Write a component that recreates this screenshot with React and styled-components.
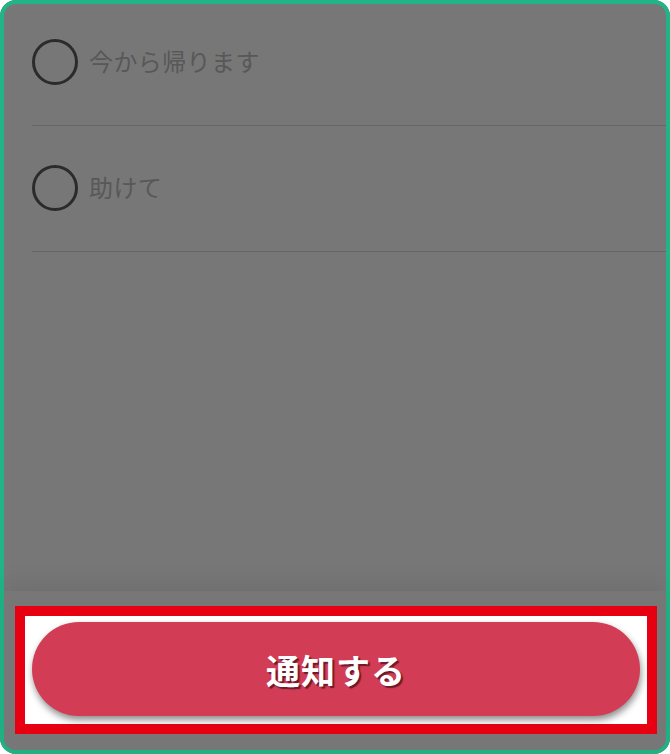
import React, { useState } from "react";
import styled, { createGlobalStyle } from "styled-components";

const GlobalStyle = createGlobalStyle`
  html, body {
    margin: 0;
    padding: 0;
    background: #ffffff;
  }
  * {
    box-sizing: border-box;
  }
`;

const options = [
  { id: 1, label: "今から帰ります" },
  { id: 2, label: "助けて" },
];

const Frame = styled.div`
  width: 670px;
  height: 754px;
  background: #777777;
  border-radius: 16px;
  box-shadow: inset 0 0 0 4px #20b486;
  display: flex;
  flex-direction: column;
  overflow: hidden;
  font-family: "Noto Sans CJK JP", "Noto Sans", sans-serif;
`;

const List = styled.ul`
  list-style: none;
  margin: 0 4px 0 0;
  padding: 0 0 0 32px;
  flex: 1;
`;

const Row = styled.li`
  display: flex;
  align-items: center;
  gap: 11px;
  padding: 39px 0 40px 0;
  border-bottom: 1px solid #666666;
  cursor: pointer;
`;

const RadioCircle = styled.span`
  width: 46px;
  height: 46px;
  border-radius: 50%;
  border: 3.5px solid #2b2b2b;
  display: flex;
  align-items: center;
  justify-content: center;
  flex-shrink: 0;

  &::after {
    content: "";
    width: 22px;
    height: 22px;
    border-radius: 50%;
    background: ${(p) => (p.checked ? "#2b2b2b" : "transparent")};
  }
`;

const Label = styled.span`
  font-size: 24px;
  line-height: 1;
  padding-bottom: 3px;
  color: #585858;
  font-weight: 400;
  letter-spacing: 0.4px;
`;

const Footer = styled.div`
  height: 159px;
  margin: 0 4px 4px 4px;
  border-radius: 0 0 12px 12px;
  background: #777777;
  box-shadow: 0 -8px 24px rgba(0, 0, 0, 0.07);
  padding: 15px 9px 16px 11px;
`;

const Highlight = styled.div`
  height: 128px;
  border: 10px solid #e60012;
  background: #ffffff;
  padding: 6px 7px 7px 7px;
`;

const NotifyButton = styled.button`
  width: 100%;
  height: 94px;
  border: none;
  border-radius: 47px;
  background: #d33c55;
  box-shadow: 1px 4px 7px rgba(0, 0, 0, 0.45);
  color: #ffffff;
  font-family: "Noto Sans CJK JP", "Noto Sans", sans-serif;
  font-size: 34px;
  font-weight: 700;
  letter-spacing: 1px;
  text-shadow: 2px 2px 1px rgba(90, 20, 35, 0.85);
  cursor: pointer;
`;

const App = () => {
  const [selected, setSelected] = useState(null);
  return (
    <>
      <GlobalStyle />
      <Frame>
        <List>
          {options.map((o) => (
            <Row key={o.id} onClick={() => setSelected(o.id)}>
              <RadioCircle checked={selected === o.id} />
              <Label>{o.label}</Label>
            </Row>
          ))}
        </List>
        <Footer>
          <Highlight>
            <NotifyButton>通知する</NotifyButton>
          </Highlight>
        </Footer>
      </Frame>
    </>
  );
};

export default App;
